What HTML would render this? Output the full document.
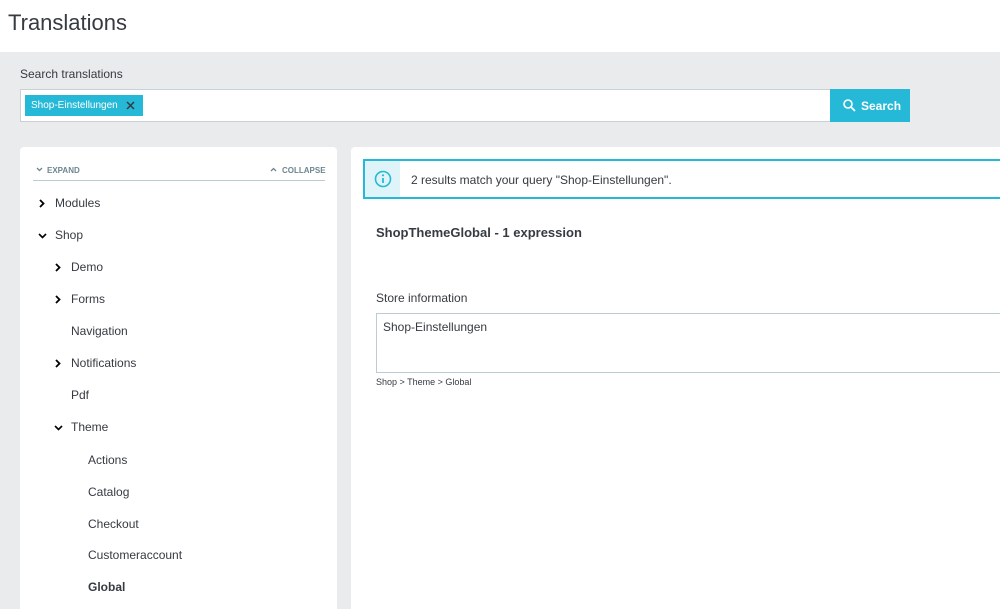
<!DOCTYPE html>
<html><head><meta charset="utf-8"><style>
*{margin:0;padding:0;box-sizing:border-box}
html,body{width:1000px;height:609px;overflow:hidden}
body{background:#eaebed;font-family:"Liberation Sans",sans-serif;color:#363a41;position:relative}
.a{position:absolute;white-space:nowrap}
.hdr{left:0;top:0;width:1000px;height:52px;background:#fff}
.t{font-size:12px}
.item{font-size:12px;color:#363a41}
svg{position:absolute}
</style></head><body>
<div class="a hdr"></div>
<div class="a" style="left:8px;top:10px;font-size:22px;color:#363a41">Translations</div>
<div class="a t" style="left:20px;top:67px;color:#363a41">Search translations</div>
<div class="a" style="left:20px;top:89px;width:811px;height:33px;background:#fff;border:1px solid #c9d0d6"></div>
<div class="a" style="left:25px;top:95px;width:118px;height:21px;background:#25b9d7;color:#fff;font-size:10px;line-height:21px;padding-left:6px">Shop-Einstellungen</div>
<svg style="left:126px;top:101px" width="9" height="9"><path d="M1 1L8 8M8 1L1 8" stroke="#363a41" stroke-width="1.5"/></svg>
<div class="a" style="left:830px;top:89px;width:80px;height:33px;background:#25b9d7"></div>
<svg style="left:843px;top:99px" width="13" height="13"><circle cx="5" cy="5" r="4" stroke="#fff" stroke-width="1.6" fill="none"/><path d="M8 8L12 12" stroke="#fff" stroke-width="1.8"/></svg>
<div class="a" style="left:861px;top:99px;color:#fff;font-size:12px;font-weight:bold">Search</div>

<div class="a" style="left:20px;top:147px;width:317px;height:470px;background:#fff;border-radius:4px"></div>
<svg style="left:36px;top:167px" width="7" height="5"><path d="M1 1L3.5 3.5L6 1" stroke="#6c868e" stroke-width="1.3" fill="none"/></svg>
<div class="a" style="left:47px;top:166px;font-size:8px;font-weight:bold;color:#6c868e">EXPAND</div>
<svg style="left:270px;top:167px" width="7" height="5"><path d="M1 4L3.5 1.5L6 4" stroke="#6c868e" stroke-width="1.3" fill="none"/></svg>
<div class="a" style="left:282px;top:166px;font-size:8px;font-weight:bold;color:#6c868e">COLLAPSE</div>
<div class="a" style="left:33px;top:180px;width:292px;height:1px;background:#bbcdd2"></div>

<svg style="left:39px;top:199px" width="6" height="9"><path d="M1 1L4.5 4.5L1 8" stroke="#000" stroke-width="1.8" fill="none"/></svg>
<div class="a item" style="left:55px;top:196px">Modules</div>
<svg style="left:38px;top:233px" width="9" height="6"><path d="M1 1L4.5 4.5L8 1" stroke="#000" stroke-width="1.6" fill="none"/></svg>
<div class="a item" style="left:55px;top:228px">Shop</div>
<svg style="left:55px;top:263px" width="6" height="9"><path d="M1 1L4.5 4.5L1 8" stroke="#000" stroke-width="1.8" fill="none"/></svg>
<div class="a item" style="left:71px;top:260px">Demo</div>
<svg style="left:55px;top:295px" width="6" height="9"><path d="M1 1L4.5 4.5L1 8" stroke="#000" stroke-width="1.8" fill="none"/></svg>
<div class="a item" style="left:71px;top:292px">Forms</div>
<div class="a item" style="left:71px;top:324px">Navigation</div>
<svg style="left:55px;top:359px" width="6" height="9"><path d="M1 1L4.5 4.5L1 8" stroke="#000" stroke-width="1.8" fill="none"/></svg>
<div class="a item" style="left:71px;top:356px">Notifications</div>
<div class="a item" style="left:71px;top:388px">Pdf</div>
<svg style="left:54px;top:425px" width="9" height="6"><path d="M1 1L4.5 4.5L8 1" stroke="#000" stroke-width="1.6" fill="none"/></svg>
<div class="a item" style="left:71px;top:420px">Theme</div>
<div class="a item" style="left:88px;top:453px">Actions</div>
<div class="a item" style="left:88px;top:485px">Catalog</div>
<div class="a item" style="left:88px;top:517px">Checkout</div>
<div class="a item" style="left:88px;top:548px">Customeraccount</div>
<div class="a item" style="left:88px;top:580px;font-weight:bold">Global</div>

<div class="a" style="left:351px;top:147px;width:660px;height:470px;background:#fff;border-radius:4px"></div>
<div class="a" style="left:363px;top:159px;width:650px;height:40px;border:2px solid #25b9d7;background:#fff"></div>
<div class="a" style="left:365px;top:161px;width:35px;height:36px;background:#def4f9"></div>
<svg style="left:374px;top:170px" width="18" height="18"><circle cx="9" cy="9" r="7.5" stroke="#25b9d7" stroke-width="1.6" fill="none"/><path d="M9 8V13" stroke="#25b9d7" stroke-width="1.8"/><circle cx="9" cy="5.3" r="1.1" fill="#25b9d7"/></svg>
<div class="a t" style="left:411px;top:173px">2 results match your query "Shop-Einstellungen".</div>
<div class="a" style="left:376px;top:225px;font-size:13px;font-weight:bold">ShopThemeGlobal - 1 expression</div>
<div class="a t" style="left:376px;top:291px">Store information</div>
<div class="a" style="left:376px;top:313px;width:640px;height:60px;border:1px solid #bbcdd2;background:#fff"></div>
<div class="a t" style="left:383px;top:320px">Shop-Einstellungen</div>
<div class="a" style="left:376px;top:377px;font-size:9px">Shop &gt; Theme &gt; Global</div>
</body></html>
